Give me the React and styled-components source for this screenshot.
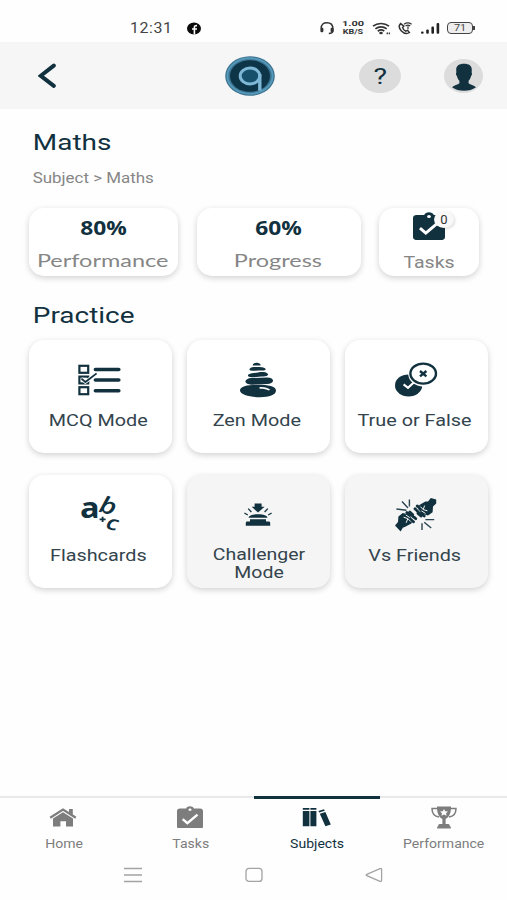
import styled, { createGlobalStyle, css } from 'styled-components';

const navy = '#12313f';
const grey = '#7d7d7d';

const GlobalStyle = createGlobalStyle`
    * {
        box-sizing: border-box;
    }

    body {
        margin: 0;
        background: #fefefe;
        font-family: Roboto, "Liberation Sans", sans-serif;
    }
`;


/* status bar icons */

const FacebookIcon = () => (
    <svg width="16" height="13" viewBox="0 0 16 13">
        <ellipse cx="8" cy="6.5" rx="7" ry="5.9" fill="#0b0b0b" />
        <path d="M8.4 12.4V5.2Q8.4 3.4 11 3.6M6 7h5" stroke="#fff" strokeWidth="1.6" fill="none" />
    </svg>
);

const HeadsetIcon = () => (
    <svg width="16" height="14" viewBox="0 0 16 14">
        <path d="M2.2 7.5C2.2 3 4.6 1.8 8 1.8s5.8 1.2 5.8 5.7v2.2c0 2-1.6 2.6-4 2.7" stroke="#333" strokeWidth="1.5" fill="none" />
        <rect x="1.4" y="6.8" width="3" height="4.4" rx="1.2" fill="#333" />
        <rect x="11.6" y="6.8" width="3" height="4.4" rx="1.2" fill="#333" />
    </svg>
);

const WifiIcon = () => (
    <svg width="19" height="13" viewBox="0 0 19 13" fill="none" stroke="#333" strokeWidth="1.7">
        <path d="M1 4.2C5.5.6 12.5.6 17 4.2M3.4 6.8c3.3-2.6 8-2.6 11.3 0M5.8 9.2c2-1.5 4.6-1.5 6.5 0" />
        <ellipse cx="9" cy="11" rx="1.8" ry="1.2" fill="#333" stroke="none" />
        <path d="M14.6 11.4h3.4" strokeWidth="1.8" strokeDasharray="1.4 .7" />
    </svg>
);

const CallIcon = () => (
    <svg width="15" height="13" viewBox="0 0 15 13" fill="none" stroke="#333">
        <path d="M2.6 1.6C.6 3.6 1 6.4 3.4 8.9c2.4 2.4 5.4 3.4 8 1.6L9.6 8.3l-2 .8C6 8.2 5 7 4.6 5.6l1.2-1.5z" strokeWidth="1.5" />
        <path d="M6 2.2c2.4-1.6 5.4-1.6 7.6 0M7.6 4c1.4-1 3.2-1 4.6 0M10 4.2v3" strokeWidth="1.2" />
    </svg>
);

const SignalIcon = () => (
    <svg width="19" height="12" viewBox="0 0 19 12" fill="#222">
        <rect x="0" y="9.4" width="2.6" height="2.4" rx="1" />
        <rect x="5.2" y="7.6" width="2.6" height="4.2" rx="1" />
        <rect x="10.4" y="4.6" width="2.6" height="7.2" rx="1" />
        <rect x="15.6" y="1" width="2.6" height="10.8" rx="1" />
    </svg>
);


/* header icons */

const BackIcon = () => (
    <svg width="18" height="26" viewBox="0 0 18 26">
        <path d="M15.8 2.6 2.8 12.8l13 10" stroke={navy} strokeWidth="4" strokeLinecap="round" fill="none" />
    </svg>
);

const Logo = () => (
    <svg width="50" height="40" viewBox="0 0 50 40">
        <ellipse cx="25" cy="20" rx="24.8" ry="19.8" fill="#39708d" />
        <ellipse cx="25" cy="20" rx="22.6" ry="17.8" fill="none" stroke="#5698b9" strokeWidth="2" />
        <ellipse cx="25" cy="20" rx="20" ry="15.8" fill="#0e3448" />
        <ellipse cx="25" cy="20" rx="9.8" ry="8" fill="#17506b" stroke="#7fb7d6" strokeWidth="3" />
        <path d="M34.8 18v16.6" stroke="#7fb7d6" strokeWidth="3.4" />
    </svg>
);

const UserIcon = () => (
    <svg width="26" height="28" viewBox="0 0 26 28" fill={navy}>
        <path d="M13 .8c5 0 8 2 7.8 6.4l-.2 2.4c.8.3.4 3-.6 3.6-.5 2-1.2 3.4-2.4 4.6v2.4c1.6 1.6 5.4 1.7 7.4 4C21.6 26.6 17.8 27.8 13 27.8S4.4 26.6 1 24.2c2-2.3 5.8-2.4 7.4-4v-2.4C7.2 16.6 6.5 15.2 6 13.2c-1-.6-1.4-3.3-.6-3.6l-.2-2.4C5 2.8 8 .8 13 .8z" />
    </svg>
);


/* mode icons */

const McqIcon = () => (
    <svg width="44" height="32" viewBox="0 0 44 32" fill="none" stroke={navy}>
        <g strokeWidth="2.2">
            <rect x="1.4" y="1.8" width="8.8" height="7" />
            <rect x="1.4" y="12.6" width="8.8" height="6.8" />
            <rect x="1.4" y="23.2" width="8.8" height="7" />
        </g>
        <path d="M3.6 14.6 7.4 18 18.6 9.6" stroke="#fff" strokeWidth="3.6" />
        <path d="m3.4 14.6 4 3.4L18.6 9.4" strokeWidth="1.8" />
        <path d="M17.4 5.5h23.4M17.4 16h23.4M17.4 26.8h23.4" strokeWidth="3.6" strokeLinecap="round" />
    </svg>
);

const ZenIcon = () => (
    <svg width="38" height="36" viewBox="0 0 38 36" fill={navy}>
        <path d="M13.6 3.4C14 1.2 16 .6 18 .8s4 1.6 3.6 2.6z" />
        <path d="M11.8 8.6c-3-.6-.6-3.6 3-3.6h5.6c4.4 0 6.8 1.4 6.2 2.6-.8 1.6-4.2.6-7.4.9-2.8.3-5 .6-7.4.1z" />
        <path d="M9.4 12.6c2.6-1.8 6-1.6 9.6-2.2 4-.6 7.6-.6 9.4 1 2 1.8-.8 3.2-4 3.2-4.4 0-9.6 1.2-13.4.4-1.8-.4-2.6-1.6-1.6-2.4z" />
        <rect x="6.4" y="15.8" width="27.6" height="6.6" rx="6" ry="3.3" transform="rotate(-2 20 19)" />
        <path fillRule="evenodd" d="M19 22.8c10 0 18 1.6 18 5.8 0 4.6-7 6.600-16 6.600S1 33 1 28.600s8-5.800 18-5.800zM20.600 25v1.800c3.400-.2 6.400.4 9.400 1.800l1-1c-2.400-2.200-6-3-10.400-2.600z" />
    </svg>
);

const TrueFalseIcon = () => (
    <svg width="44" height="36" viewBox="0 0 44 36" fill="none">
        <ellipse cx="14.6" cy="23.4" rx="13.6" ry="11" fill={navy} />
        <path d="m9.6 22.4 4.4 3.4 6-5.6" stroke="#fff" strokeWidth="2.2" />
        <ellipse cx="29.2" cy="11.8" rx="15" ry="12.6" fill="#fff" />
        <ellipse cx="29.2" cy="11.6" rx="12.8" ry="10" stroke={navy} strokeWidth="2.4" />
        <path d="m26 9 6.4 5.4M32.4 9 26 14.4" stroke={navy} strokeWidth="2.4" />
    </svg>
);

const Letters = () => (
    <LettersBox width="42" height="38" viewBox="0 0 42 38" fill={navy} fontFamily="Open Sans, sans-serif" fontWeight="700">
        <text transform="translate(1 22) scale(1.16 1)" fontSize="28">a</text>
        <text transform="translate(19 15.5) rotate(14) scale(1.25 1)" fontSize="23" fontStyle="italic" fontWeight="600">b</text>
        <text transform="translate(26 32.5) rotate(12) scale(1.3 1)" fontSize="20" fontStyle="italic" fontWeight="600">c</text>
        <path d="M20.6 23.4h6M23.6 20.8v5.2" stroke={navy} strokeWidth="1.8" />
    </LettersBox>
);

const ChallengerIcon = () => (
    <svg width="28" height="24" viewBox="0 0 28 24" fill={navy}>
        <path d="M10.6.6h7v3.2h3L14 9.4 7.6 3.8h3z" />
        <path d="M4.6 14.8c0-2.2 4-3.6 9.4-3.6s9.4 1.4 9.4 3.6z" />
        <path d="M6 16.2h16v2.4h2.8c1 0 1.4.6 1.4 2v2.2H1.8v-2.2c0-1.4.4-2 1.4-2H6z" />
        <path d="M4.2 5.6 7.4 9M.4 10l3.4 2M23.8 5.6 20.6 9M27.6 10l-3.4 2" stroke={navy} strokeWidth="1.3" />
    </svg>
);

const FistsIcon = () => (
    <svg width="42" height="34" viewBox="0 0 42 34" fill="none">
        <path d="M0 27.4 3 24l.4-5.4 4.4-3.6 5.8 1.6 4 5.2-1.2 3.6-6.2 3.4-2.4 1L5.6 33.6z" fill={navy} />
        <path d="m41.2 5.4-3.2 3.2-.4 5.6-4.6 3.4-6-1.8-4-5 1.4-3.8 6-3.4L33 3.4 35.8 0l5.4 1.6z" fill={navy} />
        <g stroke={navy} strokeWidth="2.8" strokeLinecap="round">
            <path d="m11.8 14.6 3 2.8M14.8 14l3 2.8M17 17.6l1.6 1.6M19.6 19.6l1.2 1.2M16.6 22.4l2 1.4" />
            <path d="m29.2 18-3-2.8M26 18l-3-2.6M23.6 14.4 22 12.8M21 11.8l-1-1M24.2 9.4l-2-1.4" />
        </g>
        <g stroke="#f5f5f5" strokeWidth="1">
            <path d="m8.6 19.2 4.2 1.4-1.6 4.2M12.8 20.6l3 3M10.8 17l4 2.6" />
            <path d="m32.4 12.8-4.2-1.2 1.4-4M28.2 11.6l-2.8-3M30.4 15.4l-4-2.6" />
        </g>
        <g stroke="#2a4450" strokeWidth="1.4">
            <path d="m7 3.6 6 6.4M14.4 1.4v7M1.4 11l10 1.2M27 25.2V32M29.2 24.2l7 5.8M30.4 21.6h8.8" />
        </g>
    </svg>
);

const TasksIcon = ({ size, color }) => (
    <svg width={size} height={size * .88} viewBox="0 0 32 28">
        <path d="M3.6 3h7.6C12 1.2 13.8.2 16 .2s4 1 4.8 2.8h7.6C30.6 3 32 4.2 32 6v19c0 1.8-1.4 3-3.6 3H3.6C1.4 28 0 26.8 0 25V6c0-1.8 1.4-3 3.6-3z" fill={color} />
        <ellipse cx="16" cy="4.4" rx="1.9" ry="1.5" fill="#fff" />
        <path d="m7 16 5.8 5L25.2 10.6" stroke="#fff" strokeWidth="3" fill="none" />
    </svg>
);


/* bottom menu icons */

const HomeIcon = () => (
    <svg width="28" height="19" viewBox="0 0 28 19" fill={grey}>
        <path d="M1.2 9.8 14 1.6l12.8 8.2" stroke={grey} strokeWidth="2.2" fill="none" />
        <path d="M20 1h3.8v6L20 4.6z" />
        <path d="m14 4.2 10 6.4v8h-7v-5.4h-5.6v5.4H4v-8z" />
    </svg>
);

const BooksIcon = () => (
    <svg width="30" height="20" viewBox="0 0 30 20" fill={navy}>
        <path d="M.8 1h6.6v1.8H.8zM.8 4h6.6v15.2H.8zM8.4 1h6v1.8h-6zM8.4 4h6v15.2h-6z" />
        <path d="m16.4 4 5.6-1.8.8 1.6-5.6 1.8zM17.8 6.8l5.6-1.8 5.4 12.4-5.4 1.8z" />
    </svg>
);

const TrophyIcon = () => (
    <svg width="26" height="23" viewBox="0 0 26 23" fill={grey}>
        <path d="M6 .4h14c.2 5.6-1.2 10.2-5.4 12.6v5h2.6c1.2 0 1.6.8 1.6 2v.6h1v1.8H6.2v-1.8h1V20c0-1.2.4-2 1.6-2h2.6v-5C7.2 10.6 5.8 6 6 .4z" />
        <path d="M6.4 2.6H1c0 5 2.6 8 7 8.4M19.6 2.6H25c0 5-2.6 8-7 8.4" stroke={grey} strokeWidth="1.5" fill="none" />
        <path d="m13 3 1.2 2.2 2.8.3-2 1.7.6 2.5L13 8.5l-2.6 1.2.6-2.5-2-1.7 2.8-.3z" fill="#fff" />
    </svg>
);


const MODES = [
    { title: 'MCQ Mode', icon: <McqIcon /> },
    { title: 'Zen Mode', icon: <ZenIcon /> },
    { title: 'True or False', icon: <TrueFalseIcon /> },
    { title: 'Flashcards', icon: <Letters /> },
    { title: 'Challenger Mode', icon: <ChallengerIcon />, muted: true, wrap: true },
    { title: 'Vs Friends', icon: <FistsIcon />, muted: true }
];

const MENU = [
    { title: 'Home', icon: <HomeIcon /> },
    { title: 'Tasks', icon: <TasksIcon size={26} color={grey} /> },
    { title: 'Subjects', icon: <BooksIcon />, active: true },
    { title: 'Performance', icon: <TrophyIcon /> }
];


const App = () => (
    <Page>
        <GlobalStyle />

        <StatusBar>
            <Clock>12:31</Clock>
            <FacebookIcon />
            <StatusIcons>
                <HeadsetIcon />
                <Speed><span>1.00</span><span>KB/S</span></Speed>
                <WifiIcon />
                <CallIcon />
                <SignalIcon />
                <Battery><span>71</span></Battery>
            </StatusIcons>
        </StatusBar>

        <Header>
            <BackButton><BackIcon /></BackButton>
            <Logo />
            <HelpButton><span>?</span></HelpButton>
            <UserButton><UserIcon /></UserButton>
        </Header>

        <Content>
            <Title>Maths</Title>
            <Breadcrumb>Subject &gt; Maths</Breadcrumb>

            <Stats>
                <Stat $width={149}>
                    <Value>80%</Value>
                    <Caption $round>Performance</Caption>
                </Stat>
                <Stat $width={164}>
                    <Value>60%</Value>
                    <Caption $round>Progress</Caption>
                </Stat>
                <Stat $width={100}>
                    <TasksBox>
                        <TasksIcon size={32} color={navy} />
                        <Badge>0</Badge>
                    </TasksBox>
                    <Caption>Tasks</Caption>
                </Stat>
            </Stats>

            <Title>Practice</Title>
            <Modes>
                {MODES.map(({ title, icon, muted, wrap }) => (
                    <Mode key={title} $muted={muted}>
                        <ModeIcon>{icon}</ModeIcon>
                        <ModeTitle $wrap={wrap}>{title}</ModeTitle>
                    </Mode>
                ))}
            </Modes>
        </Content>

        <Menu>
            {MENU.map(({ title, icon, active }) => (
                <MenuItem key={title} $active={active}>
                    <MenuIcon>{icon}</MenuIcon>
                    <MenuTitle>{title}</MenuTitle>
                </MenuItem>
            ))}
        </Menu>

        <SystemBar>
            <svg width="18" height="16" viewBox="0 0 18 16" stroke="#a3a3a3" strokeWidth="1.3">
                <path d="M0 1.5h18M0 8h18M0 14.5h18" />
            </svg>
            <svg width="18" height="16" viewBox="0 0 18 16" fill="none" stroke="#a3a3a3" strokeWidth="1.3">
                <rect x="1" y="1.4" width="16" height="13" rx="3" />
            </svg>
            <svg width="18" height="16" viewBox="0 0 18 16" fill="none" stroke="#a3a3a3" strokeWidth="1.3">
                <path d="M1.8 7.3 15 1.7q1.6-.6 1.6 1v10.6q0 1.6-1.6 1L1.8 8.7q-1.2-.7 0-1.4z" />
            </svg>
        </SystemBar>
    </Page>
);

export default App;

const Page = styled.div`
    display: flex;
    flex-direction: column;
    width: 507px;
    height: 900px;
    overflow: hidden;
    color: ${navy};
`;

const StatusBar = styled.div`
    display: flex;
    align-items: center;
    height: 42px;
    padding: 14px 32px 0 130px;
`;

const Clock = styled.div`
    width: 56px;
    color: #444;
    font-size: 14.5px;
    letter-spacing: .5px;
    white-space: nowrap;
    transform: scaleX(1.1);
    transform-origin: left;
`;

const StatusIcons = styled.div`
    display: flex;
    align-items: center;
    justify-content: space-between;
    width: 156px;
    margin-left: auto;
`;

const Speed = styled.div`
    display: flex;
    flex-direction: column;
    align-items: center;
    width: 22px;
    color: #333;
    font-size: 7px;
    font-weight: 700;
    line-height: 8px;

    span {
        transform: scaleX(1.28);
    }

    span:first-child {
        font-size: 8px;
        transform: scaleX(1.38);
    }
`;

const Battery = styled.div`
    position: relative;
    display: flex;
    align-items: center;
    justify-content: center;
    width: 26px;
    height: 12px;
    margin-right: 2px;
    border: 1.5px solid #444;
    border-radius: 4px;
    background: #eee;
    color: #444;
    font-size: 9px;
    line-height: 10px;

    span {
        transform: scaleX(1.2);
    }

    &::after {
        content: '';
        position: absolute;
        right: -3px;
        top: 3px;
        width: 2px;
        height: 4px;
        background: #444;
    }
`;

const Header = styled.div`
    display: flex;
    align-items: center;
    height: 67px;
    padding: 0 24px 0 38px;
    background: #f6f6f6;
`;

const BackButton = styled.div`
    display: flex;
    width: 187px;
`;

const RoundButton = styled.div`
    display: flex;
    justify-content: center;
    height: 34px;
    border-radius: 50%;
    background: #dcdcdc;
`;

const HelpButton = styled(RoundButton)`
    align-items: center;
    width: 42px;
    margin-left: 84px;
    padding-top: 2px;
    font-size: 22px;

    span {
        transform: scaleX(1.3);
    }
`;

const UserButton = styled(RoundButton)`
    align-items: flex-end;
    width: 39px;
    margin-left: auto;
    padding-bottom: 2px;
`;

const Content = styled.div`
    flex: 1;
    padding: 21px 19px 0 29px;
`;

const Title = styled.div`
    height: 26px;
    padding-left: 3px;
    font-size: 22px;
    line-height: 26px;
    white-space: nowrap;
    transform: scaleX(1.27);
    transform-origin: left;
`;

const Breadcrumb = styled.div`
    height: 20px;
    margin-top: 12px;
    padding-left: 3px;
    color: #868686;
    font-size: 14px;
    line-height: 20px;
    transform: scaleX(1.21);
    transform-origin: left;
`;

const Stats = styled.div`
    display: flex;
    justify-content: space-between;
    margin: 20px 9px 27px 0;
`;

const Card = styled.div`
    display: flex;
    flex-direction: column;
    align-items: center;
    border-radius: 15px;
    background: #fff;
    box-shadow: 0 2px 6px rgba(0, 0, 0, .18);
`;

const Stat = styled(Card)`
    width: ${props => props.$width}px;
    height: 68px;
`;

const Value = styled.div`
    height: 40px;
    font-family: "Open Sans", sans-serif;
    font-size: 20px;
    font-weight: 700;
    line-height: 40px;
    transform: scaleX(1.14);
`;

const Caption = styled.div`
    color: #868686;
    font-size: 16px;
    line-height: 30px;
    transform: scaleX(1.22);

    ${props => props.$round && css`
        margin-right: 1px;
        font-family: Lato, sans-serif;
        font-size: 17px;
        line-height: 26px;
        transform: scaleX(1.38);
    `}
`;

const TasksBox = styled.div`
    position: relative;
    flex: none;
    height: 40px;
    padding-top: 4px;
`;

const Badge = styled.div`
    position: absolute;
    left: 21px;
    top: 3px;
    width: 20px;
    height: 17px;
    border-radius: 50%;
    background: #f8f8f8;
    box-shadow: 1px 1px 3px rgba(0, 0, 0, .15);
    color: #333;
    font-size: 13px;
    line-height: 18px;
    text-align: center;
`;

const Modes = styled.div`
    display: grid;
    grid-template-columns: repeat(3, 143px);
    justify-content: space-between;
    row-gap: 22px;
    margin-top: 11px;
`;

const Mode = styled(Card)`
    height: 113px;
    padding-top: 16px;
    background: ${props => props.$muted ? '#f5f5f5' : '#fff'};
`;

const ModeIcon = styled.div`
    display: flex;
    align-items: center;
    height: 48px;
    margin-right: 1px;
`;

const LettersBox = styled.svg`
    overflow: visible;
`;

const ModeTitle = styled.div`
    margin: 7px 4px 0 0;
    color: #33444d;
    font-size: 16.5px;
    line-height: 19px;
    text-align: center;
    white-space: nowrap;
    transform: scaleX(1.2);

    ${props => props.$wrap && css`
        width: 90px;
        margin-right: 0;
        line-height: 18px;
        white-space: normal;
        transform: scaleX(1.18);
    `}
`;

const Menu = styled.div`
    display: flex;
    height: 58px;
`;

const MenuItem = styled.div`
    display: flex;
    flex: 1;
    flex-direction: column;
    align-items: center;
    color: ${grey};
    box-shadow: inset 0 2px #e9e9e9;

    ${props => props.$active && css`
        color: ${navy};
        box-shadow: inset 0 3px ${navy};
    `}
`;

const MenuIcon = styled.div`
    display: flex;
    align-items: center;
    height: 42px;
`;

const MenuTitle = styled.div`
    margin: -2px 0 0 1px;
    font-size: 12px;
    line-height: 16px;
    transform: scaleX(1.17);
`;

const SystemBar = styled.div`
    display: flex;
    justify-content: space-between;
    height: 46px;
    padding: 13px 124px 0;
`;
